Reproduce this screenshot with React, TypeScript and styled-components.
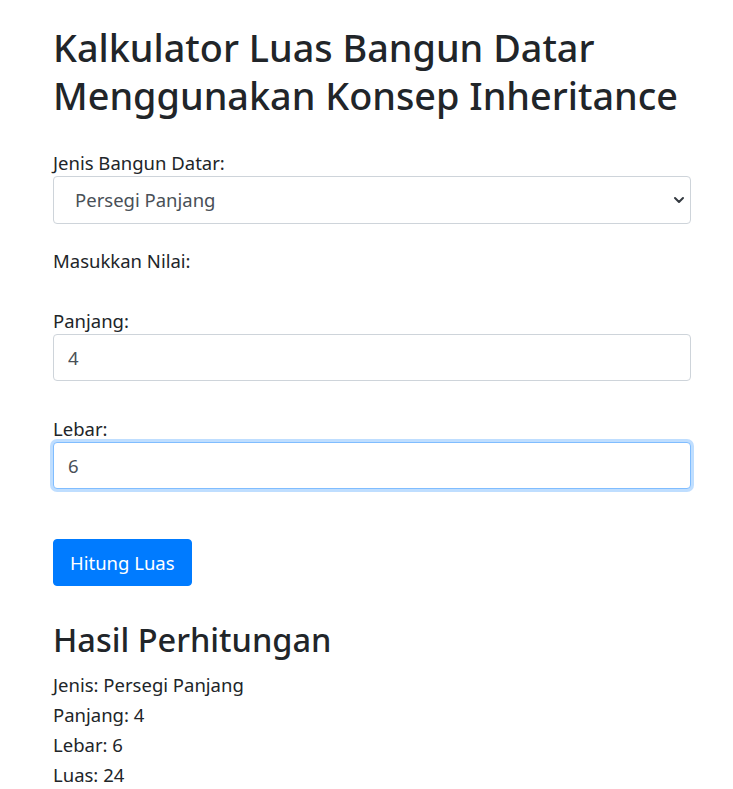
import React from "react";
import styled, { createGlobalStyle } from "styled-components";

const Global = createGlobalStyle`
  html, body { margin: 0; padding: 0; background: #fff; }
  body {
    font-family: "Noto Sans", "Open Sans", sans-serif;
    color: #212529;
    font-size: 18.5px;
    line-height: 1.5;
  }
  * { box-sizing: border-box; }
`;

const Container = styled.div`
  width: 638px;
  margin-left: 53px;
  padding-top: 24px;
`;

const Title = styled.h1`
  font-size: 37.8px;
  font-weight: 500;
  line-height: 48px;
  margin: 0 0 29px;
`;

const Group = styled.div<{ $gap?: number }>`
  display: flex;
  flex-direction: column;
  margin-bottom: ${(p) => p.$gap ?? 24}px;
`;

const Label = styled.label`
  display: block;
  line-height: 27px;
  margin-bottom: 0;
`;

const SelectWrap = styled.div`
  position: relative;
`;

const Select = styled.select`
  appearance: none;
  width: 100%;
  height: 48px;
  padding: 0 21px;
  font: inherit;
  color: #495057;
  background: #fff;
  border: 1px solid #ced4da;
  border-radius: 4px;
  outline: none;
`;

const Chevron = styled.svg`
  position: absolute;
  right: 6px;
  top: 19px;
  width: 12px;
  height: 10px;
  pointer-events: none;
`;

const Input = styled.input<{ $focus?: boolean }>`
  width: 100%;
  height: 47px;
  padding: 0 14px;
  font: inherit;
  color: #495057;
  background: #fff;
  border: 1px solid ${(p) => (p.$focus ? "#80bdff" : "#ced4da")};
  border-radius: 4px;
  outline: none;
  box-shadow: ${(p) => (p.$focus ? "0 0 0 3px rgba(0,123,255,.25)" : "none")};
`;

const Plain = styled.div`
  line-height: 27px;
  margin-bottom: 33px;
`;

const Button = styled.button`
  align-self: flex-start;
  height: 47px;
  padding: 0 16px;
  font: inherit;
  color: #fff;
  background: #007bff;
  border: 1px solid #007bff;
  border-radius: 4px;
  cursor: pointer;
`;

const SubTitle = styled.h2`
  font-size: 32.5px;
  font-weight: 500;
  line-height: 38px;
  margin: 35px 0 11px;
`;

const ResultLine = styled.p`
  margin: 0;
  line-height: 30px;
`;

export default function App() {
  return (
    <>
      <Global />
      <Container>
        <Title>Kalkulator Luas Bangun Datar Menggunakan Konsep Inheritance</Title>
        <Group $gap={23}>
          <Label>Jenis Bangun Datar:</Label>
          <SelectWrap>
            <Select defaultValue="pp">
              <option value="pp">Persegi Panjang</option>
            </Select>
            <Chevron viewBox="0 0 12 10">
              <path d="M2 3 L6 7 L10 3" fill="none" stroke="#343a40" strokeWidth="2" strokeLinecap="round" strokeLinejoin="round" />
            </Chevron>
          </SelectWrap>
        </Group>
        <Plain>Masukkan Nilai:</Plain>
        <Group $gap={34}>
          <Label>Panjang:</Label>
          <Input defaultValue="4" />
        </Group>
        <Group $gap={50}>
          <Label>Lebar:</Label>
          <Input defaultValue="6" $focus />
        </Group>
        <Button>Hitung Luas</Button>
        <SubTitle>Hasil Perhitungan</SubTitle>
        <ResultLine>Jenis: Persegi Panjang</ResultLine>
        <ResultLine>Panjang: 4</ResultLine>
        <ResultLine>Lebar: 6</ResultLine>
        <ResultLine>Luas: 24</ResultLine>
      </Container>
    </>
  );
}
